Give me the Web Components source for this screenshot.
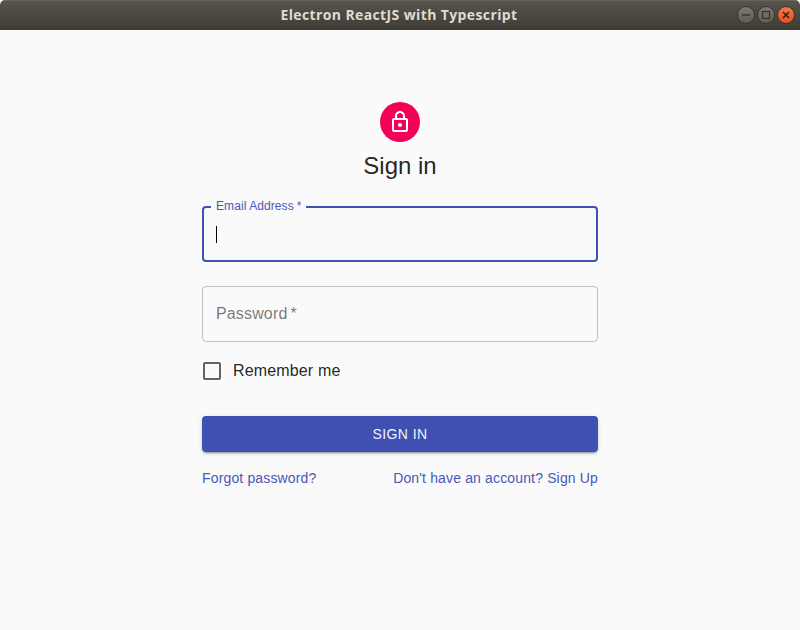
<!DOCTYPE html>
<html lang="en"><head><meta charset="utf-8"><title>Electron ReactJS with Typescript</title>
<style>
html,body{margin:0;padding:0;width:800px;height:630px;overflow:hidden;background:#fafafa}
body{font-family:"Liberation Sans",sans-serif}
</style></head><body>
<app-window heading="Electron ReactJS with Typescript">
  <sign-in-card heading="Sign in">
    <text-field label="Email Address" focused></text-field>
    <text-field label="Password"></text-field>
    <check-row label="Remember me"></check-row>
    <submit-button>Sign In</submit-button>
    <link-row>
      <a-link>Forgot password?</a-link>
      <a-link>Don't have an account? Sign Up</a-link>
    </link-row>
  </sign-in-card>
</app-window>
<script>
const SANS='"Liberation Sans",Arial,sans-serif';
const INDIGO='#3f51b5';
const INDIGO_TEXT='#4858ba';
function def(name, css, html){
  customElements.define(name, class extends HTMLElement{
    connectedCallback(){
      if(this.shadowRoot) return;
      const r=this.attachShadow({mode:'open'});
      r.innerHTML='<style>'+css+'</style>'+(typeof html==='function'?html(this):html);
    }
  });
}
def('app-window',`
  :host{display:flex;flex-direction:column;width:800px;height:630px;background:#fafafa}
  main{flex:1;min-height:0}
`,h=>`<window-bar heading="${h.getAttribute('heading')}"></window-bar><main><slot></slot></main>`);

def('window-bar',`
  :host{display:grid;grid-template-columns:1fr auto 1fr;align-items:center;height:30px;box-sizing:border-box;
    background:linear-gradient(#5c574f 0,#57534a 2px,#3f3c36 100%);border-radius:5px 5px 0 0;
    box-shadow:inset 0 1px 0 rgba(255,255,255,.08)}
  h1{grid-column:2;margin:0;padding-right:2px;font:700 14px "Open Sans","DejaVu Sans",sans-serif;letter-spacing:.38px;color:#dfdbd2;white-space:nowrap;line-height:30px}
  div{grid-column:3;justify-self:end;display:flex;gap:2px;padding-right:5px}
`,h=>`<h1>${h.getAttribute('heading')}</h1><div><win-btn kind="min"></win-btn><win-btn kind="max"></win-btn><win-btn kind="close"></win-btn></div>`);

def('win-btn',`
  :host{display:block;width:18px;height:18px}
  svg{display:block}
`,h=>{
  const k=h.getAttribute('kind');
  const glyph={min:'<path d="M5 9h8" stroke="#33312c" stroke-width="1.3"/>',
    max:'<rect x="5.5" y="5.5" width="7" height="7" fill="none" stroke="#33312c" stroke-width="1.2"/>',
    close:'<path d="M6 6l6 6M12 6l-6 6" stroke="#3a1a0c" stroke-width="1.5"/>'}[k];
  const fill=k==='close'?'url(#c)':'url(#g)';
  return `<svg width="18" height="18" viewBox="0 0 18 18"><defs>
    <linearGradient id="g" x1="0" y1="0" x2="0" y2="1"><stop offset="0" stop-color="#7d7a73"/><stop offset="1" stop-color="#5f5c55"/></linearGradient>
    <linearGradient id="c" x1="0" y1="0" x2="0" y2="1"><stop offset="0" stop-color="#f4794a"/><stop offset="1" stop-color="#e2521f"/></linearGradient></defs>
    <circle cx="9" cy="9" r="8.5" fill="${fill}" stroke="#35332e" stroke-width="1"/>${glyph}</svg>`;
});

def('sign-in-card',`
  :host{display:flex;flex-direction:column;align-items:center;width:396px;margin:0 auto;padding-top:72px}
  .avatar{width:40px;height:40px;border-radius:50%;background:#f50057;display:flex;align-items:center;justify-content:center;margin-bottom:8px}
  svg{display:block;fill:#fff}
  h2{margin:0;font:400 24px/32px ${SANS};color:rgba(0,0,0,.87)}
  form{width:100%;margin-top:8px;display:flex;flex-direction:column}
`,h=>`<div class="avatar"><svg width="24" height="24" viewBox="0 0 24 24"><path d="M18 8h-1V6c0-2.76-2.24-5-5-5S7 3.24 7 6v2H6c-1.1 0-2 .9-2 2v10c0 1.1.9 2 2 2h12c1.1 0 2-.9 2-2V10c0-1.1-.9-2-2-2zM9 6c0-1.66 1.34-3 3-3s3 1.34 3 3v2H9V6zm9 14H6V10h12v10zm-6-3c1.1 0 2-.9 2-2s-.9-2-2-2-2 .9-2 2 .9 2 2 2z"/></svg></div><h2>${h.getAttribute('heading')}</h2><form><slot></slot></form>`);

def('text-field',`
  :host{display:block;position:relative;height:56px;margin:16px 0 8px;box-sizing:border-box;font:400 16px/19px ${SANS};letter-spacing:.15px}
  .box{height:100%;box-sizing:border-box;border:1px solid rgba(0,0,0,.23);border-radius:4px;padding:0 13px 2px;display:flex;align-items:center;color:rgba(0,0,0,.54)}
  .caret{display:block;width:1px;height:17px;background:#000;margin-top:3px}
  .lab{position:absolute;left:9px;top:-7px;padding:0 4px 0 5px;background:#fafafa;font-size:12px;line-height:14px;letter-spacing:.08px;color:${INDIGO_TEXT}}
  :host([focused]) .box{border:2px solid ${INDIGO};padding:0 12px 2px}
  i{font-style:normal;margin-left:3px}
`,h=>{
  const l=h.getAttribute('label');
  return h.hasAttribute('focused')
   ? `<div class="box"><span class="caret"></span></div><span class="lab">${l}<i>*</i></span>`
   : `<div class="box"><span>${l}<i>*</i></span></div>`;
});

def('check-row',`
  :host{display:flex;align-items:center;height:42px;font:400 16px/24px ${SANS};letter-spacing:.15px;color:rgba(0,0,0,.87);margin-left:-2px;gap:9px}
  svg{display:block;fill:rgba(0,0,0,.6)}
`,h=>`<svg width="24" height="24" viewBox="0 0 24 24"><path d="M19 5v14H5V5h14m0-2H5c-1.1 0-2 .9-2 2v14c0 1.1.9 2 2 2h14c1.1 0 2-.9 2-2V5c0-1.1-.9-2-2-2z"/></svg><span>${h.getAttribute('label')}</span>`);

def('submit-button',`
  :host{display:flex;align-items:center;justify-content:center;height:36px;margin:24px 0 16px;border-radius:4px;background:#3f4fb2;color:#f2f3fa;
    font:400 14px/20px ${SANS};letter-spacing:.4px;text-transform:uppercase;
    box-shadow:0 3px 1px -2px rgba(0,0,0,.2),0 2px 2px 0 rgba(0,0,0,.14),0 1px 5px 0 rgba(0,0,0,.12)}
`,`<slot></slot>`);

def('link-row',`:host{display:flex;justify-content:space-between}`,`<slot></slot>`);
def('a-link',`:host{display:block;font:400 14px/20px ${SANS};letter-spacing:.15px;color:${INDIGO_TEXT};cursor:pointer}`,`<slot></slot>`);
</script></body></html>
